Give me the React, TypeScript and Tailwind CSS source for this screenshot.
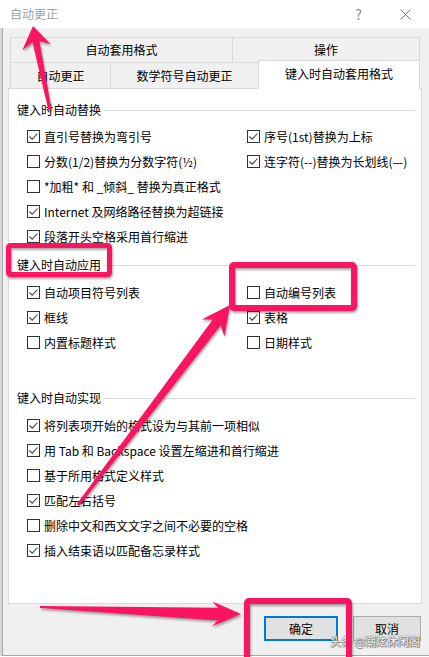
import React from "react";

const FONT = { fontFamily: '"Noto Sans CJK SC", "Noto Sans", sans-serif' };

function Box({ checked }: { checked?: boolean }) {
  return (
    <span className="w-[13px] h-[13px] border border-[#333333] bg-white shrink-0 flex items-center justify-center">
      {checked && (
        <svg width="11" height="11" viewBox="0 0 11 11">
          <polyline points="1.5,5.5 4.2,8.2 9.5,2.5" fill="none" stroke="#444" strokeWidth="1.1" />
        </svg>
      )}
    </span>
  );
}

function Row({ label, checked }: { label: string; checked?: boolean }) {
  return (
    <div className="h-[25px] flex items-center gap-[4px]">
      <Box checked={checked} />
      <span className="text-[12px] leading-[16px] text-black whitespace-nowrap">{label}</span>
    </div>
  );
}

function Header({ label, className }: { label: string; className: string }) {
  return (
    <div className={"h-[20px] flex items-center gap-[3px] pr-[6px] " + className}>
      <span className="text-[12px] leading-[16px] text-black whitespace-nowrap">{label}</span>
      <div className="flex-1 h-px bg-[#dcdcdc]" />
    </div>
  );
}

export default function App() {
  const pink = "#fb1461";
  return (
    <div className="relative w-[429px] h-[657px] overflow-hidden bg-white" style={FONT}>
      {/* title bar */}
      <div className="h-[28px] bg-white flex items-center pl-[10px]">
        <span className="text-[12px] text-[#a0a0a0]">自动更正</span>
        <span className="ml-auto mr-[38px] text-[14px] text-[#8a8a8a]">?</span>
        <svg width="11" height="11" viewBox="0 0 11 11" className="mr-[18px]">
          <path d="M0.5 0.5 L10.5 10.5 M10.5 0.5 L0.5 10.5" stroke="#7a7a7a" strokeWidth="1" />
        </svg>
      </div>
      {/* body */}
      <div className="h-[628px] flex">
        <div className="w-[2px] bg-[#d8d8d8]" />
        <div className="flex-1 bg-[#f0f0f0] border-l border-b border-[#a8a8a8] flex flex-col">
          {/* tabs */}
          <div className="ml-[7px] w-[410px] mt-[9px] flex flex-col">
            <div className="h-[25px] flex">
              <div className="w-[222px] border-t border-l border-[#d9d9d9] flex items-center justify-center text-[12px] text-black">
                自动套用格式
              </div>
              <div className="w-[188px] border-t border-l border-r border-[#d9d9d9] flex items-center justify-center text-[12px] text-black">
                操作
              </div>
            </div>
            <div className="h-[26px] flex items-end">
              <div className="w-[100px] h-[26px] border-t border-l border-[#d9d9d9] flex items-center justify-center text-[12px] text-black">
                自动更正
              </div>
              <div className="w-[148px] h-[26px] border-t border-l border-[#d9d9d9] flex items-center justify-center text-[12px] text-black">
                数学符号自动更正
              </div>
              <div className="w-[162px] h-[29px] -mb-px relative z-10 bg-white border-t border-l border-r border-[#d9d9d9] flex items-center justify-center pb-[2px] text-[12px] text-black">
                键入时自动套用格式
              </div>
            </div>
          </div>
          {/* panel */}
          <div className="ml-[5px] w-[414px] h-[516px] bg-white border border-[#d9d9d9] pl-[8px] flex flex-col">
            <Header label="键入时自动替换" className="mt-[11px]" />
            <div className="mt-[4px] ml-[10px] grid grid-cols-[220px_1fr]">
              <div className="flex flex-col">
                <Row label="直引号替换为弯引号" checked />
                <Row label="分数(1/2)替换为分数字符(½)" />
                <Row label="*加粗* 和 _倾斜_ 替换为真正格式" />
                <Row label="Internet 及网络路径替换为超链接" checked />
                <Row label="段落开头空格采用首行缩进" checked />
              </div>
              <div className="flex flex-col">
                <Row label="序号(1st)替换为上标" checked />
                <Row label="连字符(--)替换为长划线(—)" checked />
              </div>
            </div>
            <Header label="键入时自动应用" className="mt-[6px]" />
            <div className="mt-[5px] ml-[10px] grid grid-cols-[220px_1fr]">
              <div className="flex flex-col">
                <Row label="自动项目符号列表" checked />
                <Row label="框线" checked />
                <Row label="内置标题样式" />
              </div>
              <div className="flex flex-col">
                <Row label="自动编号列表" />
                <Row label="表格" checked />
                <Row label="日期样式" />
              </div>
            </div>
            <Header label="键入时自动实现" className="mt-[33px]" />
            <div className="mt-[5px] ml-[10px] flex flex-col">
              <Row label="将列表项开始的格式设为与其前一项相似" checked />
              <Row label="用 Tab 和 Backspace 设置左缩进和首行缩进" checked />
              <Row label="基于所用格式定义样式" />
              <Row label="匹配左右括号" checked />
              <Row label="删除中文和西文文字之间不必要的空格" />
              <Row label="插入结束语以匹配备忘录样式" checked />
            </div>
          </div>
          {/* buttons */}
          <div className="mt-[12px] flex pl-[261px] gap-[15px]">
            <div className="w-[74px] h-[25px] bg-[#e1e1e1] border-2 border-[#0078d7] flex items-center justify-center text-[12px] text-black">
              确定
            </div>
            <div className="w-[68px] h-[25px] bg-[#e1e1e1] border border-[#adadad] flex items-center justify-center text-[12px] text-black">
              取消
            </div>
          </div>
        </div>
      </div>

      {/* watermark */}
      <div className="absolute left-[330px] top-[633px] text-[11px] leading-[16px] text-white whitespace-nowrap [text-shadow:0_0_1px_#555,0_0_1px_#555,1px_1px_1px_#777]">
        头条 @潮炫休闲阁
      </div>

      {/* annotations */}
      <svg
        className="absolute left-0 top-0 pointer-events-none [filter:drop-shadow(1px_2px_1px_rgba(0,0,0,0.35))]"
        width="429"
        height="657"
        viewBox="0 0 429 657"
      >
        <polygon
          fill={pink}
          points="33,26 50.5,44 39.4,41.1 51.5,109.8 48.5,110.2 32.6,42.3 22.3,50.2"
        />
        <polygon
          fill={pink}
          points="230,305 224.5,336.2 220.6,325.5 79.2,505.9 76.8,504.1 212.8,319.5 201.7,319.4"
        />
        <polygon
          fill={pink}
          points="241,614 211.5,626.5 217.8,620.5 40,608 40,606 218.2,607.8 212.5,601.5"
        />
        <rect x="8.5" y="245.5" width="101" height="29" rx="2" fill="none" stroke={pink} strokeWidth="5" />
        <rect x="232" y="265" width="122" height="43" rx="2" fill="none" stroke={pink} strokeWidth="6" />
        <rect x="247" y="601" width="102" height="62" rx="2" fill="none" stroke={pink} strokeWidth="6" />
      </svg>
    </div>
  );
}
